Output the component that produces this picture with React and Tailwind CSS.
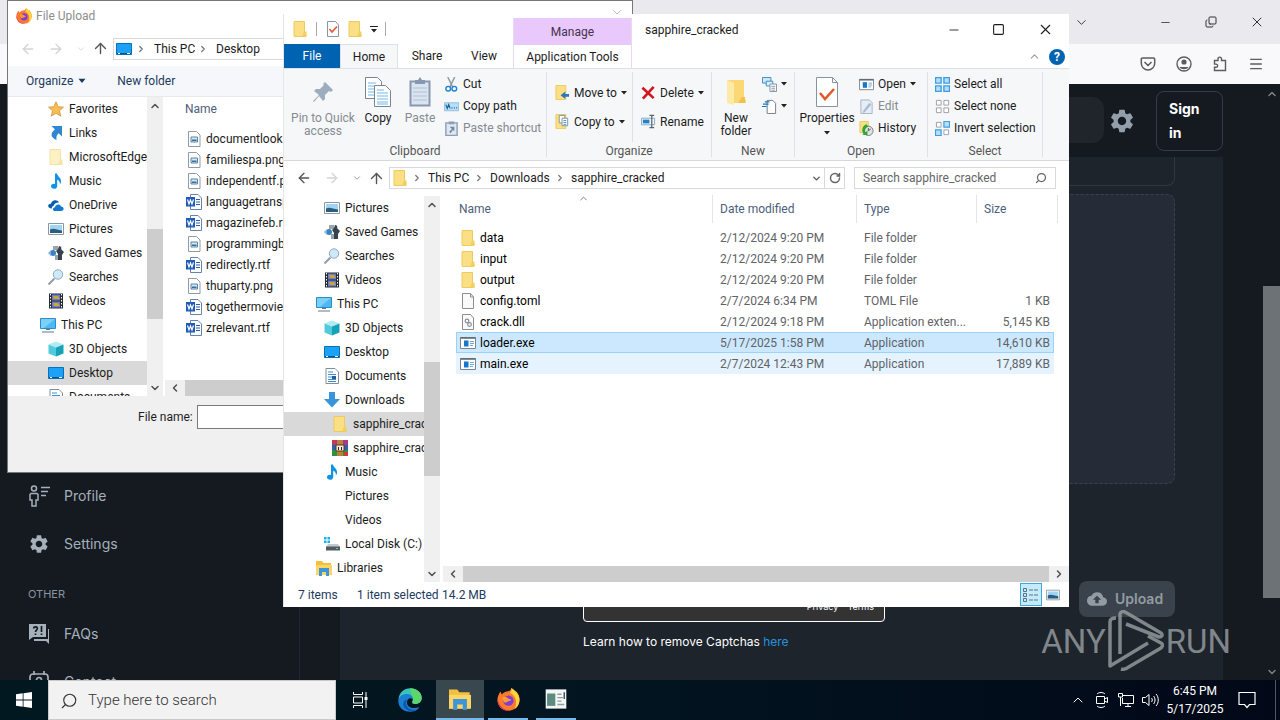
import { ChevronDown, ChevronUp, ChevronLeft, ChevronRight, ArrowLeft, ArrowRight, ArrowUp, Menu, Minus, Square, X, Copy, RotateCw, Search } from 'lucide-react'
import { MdSettings, MdCloudUpload } from 'react-icons/md'

const icons = {
  folder: (
    <>
      <path d="M2 .5h10.500v11.500l1.500 1v2.500H2z" fill="#fbdf84" stroke="#eecb5e" />
      <path d="M12 10.500h2.500v5H10z" fill="#f3cf62" />
    </>
  ),
  palefolder: (
    <>
      <path d="M2 .5h10.500v11.500l1.500 1v2.500H2z" fill="#fdf0c3" stroke="#f3e2a8" />
      <path d="M12 10.500h2.500v5H10z" fill="#f6e4ab" />
    </>
  ),
  star: <path d="m8 .8 2.200 4.900 5.300.5-4 3.500 1.200 5.400L8 12.300l-4.700 2.800 1.200-5.400-4-3.500 5.300-.5z" fill="#f9bd56" stroke="#c98a2c" strokeWidth=".7" />,
  links: <path d="M3.500 1H14v10.500l-3.300-3.200c-2 1.700-2.600 3.700-2.200 6.700C2.500 12.500 2 8 7 4.500z" fill="#2f86d2" />,
  music: <path d="M7 .5h2c.3 3 4.500 4 4 8.500-.1 1.200-.7 2-1.200 2.600.4-2.600-.6-4-2.600-4.800v6.100C9.200 17 2.500 16.500 3 13c.3-2 2.500-2.700 4-2z" fill="#0f93e4" />,
  onedrive: (
    <>
      <path d="M4 11.500C1 11.500 0 10 .2 8.500.5 7 2 6.500 3 6.700 3.500 4 6 2.600 8.500 3.400c1.300.4 2 1.200 2.500 2-3-.2-5.200 1.500-5.500 3.600C4 9.300 3.500 10.500 4 11.500z" fill="#0a5cb0" />
      <path d="M7 14c-2.500 0-2.800-3.500 0-3.700C7.500 7 12 6.500 13 9.500c3.500 0 3.500 4.500 0 4.500z" fill="#1478d0" />
    </>
  ),
  pictures: (
    <>
      <path d="M.5 2.500h15v11H.5z" fill="#fff" stroke="#8a98a5" />
      <path d="M2 4h12v8H2z" fill="#9fd4f4" />
      <path d="M2 8.500c4-2 6 0 12 1V12H2z" fill="#2c5d7d" />
    </>
  ),
  games: (
    <>
      <circle cx="5" cy="8" r="3" fill="#3b82c4" />
      <path d="M0 8 3 5v6z" fill="#7eb1de" />
      <path d="M5 1h5v4H5zM7 10h5v5H7z" fill="#9aa4ac" />
      <path d="M11 1c2 0 3 2 2 3l3 3-2 3v5h-4V9L8 6l2-2z" fill="#36424c" />
    </>
  ),
  searches: (
    <>
      <path d="m6.500 9.500-6 6" stroke="#929da6" strokeWidth="2" />
      <circle cx="10" cy="5.500" r="4.700" fill="#cfe9f9" stroke="#8ba9be" />
    </>
  ),
  videos: (
    <>
      <path d="M1 .5h14v15H1z" fill="#262b38" />
      <path d="M4 1.500h8v6H4zm0 7h8v6H4z" fill="#6f7bd0" />
      <path d="M5 3h5l2 3H6zm0 7h5l2 3H6z" fill="#c0ad2a" />
      <path d="M2.500 1v14m11-14v14" stroke="#fff" strokeDasharray="1.500 1.500" />
    </>
  ),
  pc: (
    <>
      <path d="M.5 1.500h15v10H.5z" fill="#4bb9f3" stroke="#2b8cc9" />
      <path d="M1 2h14L4 11H1z" fill="#7bd0f8" />
      <path d="M2 15h12M6 12.500h4" stroke="#65788a" />
    </>
  ),
  objects: (
    <>
      <path d="m8 .5 7.500 3L8 6.500.5 3.500z" fill="#b1ecf2" />
      <path d="M.5 3.500 8 6.500v9l-7.500-3z" fill="#4fcbdc" />
      <path d="m8 6.500 7.500-3v9l-7.500 3z" fill="#16a3ba" />
    </>
  ),
  desktop: (
    <>
      <path d="M.5 2.500h15v11H.5z" fill="#1ba1f5" stroke="#0571b8" />
      <path d="M1 12.500h14" stroke="#0a4f85" />
      <path d="M2 12.500h2m7 0h3" stroke="#fff" />
    </>
  ),
  documents: (
    <>
      <path d="M2 .5h9l3.500 3.500v11.500H2z" fill="#fff" stroke="#7d8f9e" />
      <path d="M4 4h5M4 6.500h8M4 9h8m-8 2.500h8m-8 2h8" stroke="#3b8fd0" />
      <path d="M8 8h4v3H8z" fill="#285d8d" />
    </>
  ),
  downloads: <path d="M5 0h6v7h5l-8 8.500L0 7h5z" fill="#3a94dc" />,
  rar: (
    <>
      <path d="M0 0h16v5H0z" fill="#a63a86" />
      <path d="M0 5h16v5H0z" fill="#2b62b4" />
      <path d="M0 10h16v6H0z" fill="#2e8f45" />
      <path d="M0 0h4v3H0zm12 12h4v4h-4z" fill="#cf3b33" />
      <path d="M5 0h6v16H5z" fill="#b98133" />
      <path d="M4 5h8v6H4z" fill="#f4ead5" stroke="#63371d" />
      <path d="M6.500 7v3m3-3v3" stroke="#222" />
    </>
  ),
  disk: (
    <>
      <path d="M0 1h2.500v2.500H0zm3.500 0H6v2.500H3.500zM0 4.500h2.500V7H0zm3.500 0H6V7H3.500z" fill="#17b0e8" />
      <path d="M4 8h10l2 3H2z" fill="#c3c9ce" />
      <path d="M2 10.500h14v4H2z" fill="#535b62" />
      <path d="M12 12.500h2" stroke="#56e27e" />
    </>
  ),
  libraries: (
    <>
      <path d="M0 1h6l1.500 2H15v12H0z" fill="#f5bf3e" />
      <path d="M0 5h16v10H0z" fill="#fcd566" />
      <path d="M3 8h10v8h-3v-4H6v4H3z" fill="#3f95d8" />
    </>
  ),
  png: (
    <>
      <path d="M2.500.5h8L14 4v11.500H2.500z" fill="#fff" stroke="#929ba3" />
      <path d="M5 6h6.500v5H5z" fill="#d3e6f4" stroke="#5b83a3" />
      <path d="M6 8.500h4.500V10H6z" fill="#31709c" />
    </>
  ),
  word: (
    <>
      <path d="M4.500.5H12l3.500 3.500v11.500h-11z" fill="#fff" stroke="#6583ad" />
      <path d="M10 5.500h4m-4 2.500h4m-4 2.500h4" stroke="#2b5cab" />
      <path d="M0 3h9v9.500H0z" fill="#1f5bb9" />
      <path d="M1.500 5.500 3 10l1.500-4L6 10l1.500-4.500" fill="none" stroke="#fff" strokeWidth="1.200" />
    </>
  ),
  file: <path d="M2.500.5h8L13.500 4v11.500h-11zM10.500.5V4h3" fill="#fafafa" stroke="#8e8e8e" />,
  dll: (
    <>
      <path d="M2.500.5h8L13.500 4v11.500h-11z" fill="#fafafa" stroke="#8e8e8e" />
      <circle cx="7" cy="7" r="1.800" fill="none" stroke="#858f97" strokeWidth="1.200" />
      <circle cx="9.500" cy="10.500" r="1.800" fill="none" stroke="#858f97" strokeWidth="1.200" />
    </>
  ),
  exe: (
    <>
      <path d="M.5 2.500h15v11H.5z" fill="#fff" stroke="#7a858e" />
      <path d="M.5 3h15" stroke="#5c666e" strokeWidth="1.500" />
      <path d="M4 5.500h4.500v6H4z" fill="#1877c9" />
      <path d="M10 6.500h4m-4 2h4m-4 2h3" stroke="#6ea6d5" />
    </>
  ),
  check: (
    <>
      <path d="M2.500.5h8L13.500 4v11.500h-11z" fill="#fff" stroke="#8797a5" />
      <path d="m4.500 8 2.500 3 5-5.500" fill="none" stroke="#e35a33" strokeWidth="1.700" />
    </>
  ),
  cut: (
    <>
      <path d="m4 0 5.500 11M11.500 0 6 11" stroke="#8b98a3" strokeWidth="1.500" />
      <circle cx="4.500" cy="12.500" r="2.500" fill="none" stroke="#1c83cf" strokeWidth="1.500" />
      <circle cx="11" cy="12.500" r="2.500" fill="none" stroke="#1c83cf" strokeWidth="1.500" />
    </>
  ),
  path: (
    <>
      <path d="M.5 4h15v8.500H.5z" fill="#b9ddf5" stroke="#8cc1e4" />
      <path d="m2 6 1.500 4L5 6l1.500 4M8 9.500h1m1.500 0h1m1.500 0h1" fill="none" stroke="#175b93" strokeWidth="1.200" />
    </>
  ),
  shortcut: (
    <>
      <path d="M2 2h12v13.500H2z" fill="#dfe7f1" stroke="#8e9db3" strokeWidth="1.500" />
      <path d="M5 .5h6v3H5z" fill="#8e9db3" />
      <path d="M6 6h5v5L9.500 9.500 7 13l-1.500-1.500 3-3z" fill="#7187a6" />
    </>
  ),
  move: (
    <>
      <path d="M1 .5h10.500v15H1z" fill="#fbdf84" stroke="#eecb5e" />
      <path d="M15 9.500h-4V7l-5 4 5 4v-2.500h4z" fill="#2b78bd" />
    </>
  ),
  copyto: (
    <>
      <path d="M1 .5h10.500v15H1z" fill="#fbdf84" stroke="#eecb5e" />
      <path d="M4.500 1.500h6v8h-6z" fill="#fff" stroke="#7d90a3" />
      <path d="M7.500 4.500h6v8h-6z" fill="#fff" stroke="#7d90a3" />
      <path d="M9 7h3m-3 2h3m-3 2h3" stroke="#438fcb" />
    </>
  ),
  delete: <path d="m1.500 3 12 11m0-12L2 14.500" stroke="#d2151e" strokeWidth="2.800" />,
  rename: (
    <>
      <path d="M.5 4.500h14v7H.5z" fill="#eef6fc" stroke="#86a7c0" />
      <path d="M2 6h7v4H2z" fill="#2580c7" />
      <path d="M9 1.500h5m-5 13h5m-2.500-13v13" stroke="#59636c" strokeWidth="1.300" />
    </>
  ),
  newitem: (
    <>
      <path d="M.5.500h9v6h-9z" fill="#cfe7f7" stroke="#388bc2" />
      <path d="M4.500 4.500h7v5h-7z" fill="#e2f0f9" stroke="#388bc2" />
      <path d="M8.500 7.500h7v8h-7z" fill="#fff" stroke="#81909c" />
      <path d="M10 10h4m-4 2h4m-4 2h4" stroke="#8b99a5" />
    </>
  ),
  easy: (
    <>
      <path d="M5.500 1.500h6l3 3v11h-9z" fill="#fff" stroke="#6f7c86" />
      <path d="M3 3h5M1 5.500h6M0 8h5" stroke="#1d74b8" strokeWidth="1.300" />
    </>
  ),
  edit: (
    <>
      <path d="M2 1h9l3 3v11.500H2z" fill="#e6edf5" stroke="#a3b1c4" />
      <path d="m13 6-7 8-2 1 1-3 6-8z" fill="#a9bbd3" />
    </>
  ),
  history: (
    <>
      <path d="M1 .5h9v12H1z" fill="#fbdf84" stroke="#eecb5e" />
      <circle cx="10" cy="10.500" r="5" fill="#dfe3e2" stroke="#747f80" />
      <path d="M10 7.500v3l2.500-2" fill="none" stroke="#555" />
      <path d="M8 3.500C3 5 2.500 11 5 14l-2 1h6v-5l-2 2c-1-2-.5-5 3-6z" fill="#33a33a" />
    </>
  ),
  selectall: <path d="M.5.500h6v6h-6zm9 0h6v6h-6zm-9 9h6v6h-6zm9 0h6v6h-6z" fill="#b6def8" stroke="#3c9de0" strokeWidth="1.500" />,
  selectnone: <path d="M1.500 1.500h5v5h-5zm8 0h5v5h-5zm-8 8h5v5h-5zm8 0h5v5h-5z" fill="#fff" stroke="#9a9fa4" />,
  invert: (
    <>
      <path d="M1.500 1.500h5v5h-5zm8 8h5v5h-5z" fill="#fff" stroke="#9a9fa4" />
      <path d="M9.500.500h6v6h-6zm-9 9h6v6h-6z" fill="#b6def8" stroke="#3c9de0" strokeWidth="1.300" />
    </>
  ),
  firefox: (
    <>
      <path d="M8 15.800C3.500 15.800.3 12.500.3 8.500c0-2.500 1-4.300 2.200-6 .2.900.5 1.500 1 2C4.300 3.300 5.500 2.500 7 2.400c2-.2 2.600-.8 3-2.400 1.500 1 2 2.200 2.300 3.400.6-.2.800-.8.800-1.300 2 1.800 2.700 4 2.600 6.500-.2 4.200-3.500 7.200-7.700 7.200z" fill="#ff7a2c" />
      <path d="M10 0c3.500 2 6 5.500 5.600 9-.4 2.500-1.500 4.300-3.200 5.500C14.500 10 13 5 9 3.500 10 2.500 10.200 1 10 0z" fill="#ffd43f" />
      <path d="M.5 7C1 12 4 15.500 9 15.800c-5 .5-9-3.300-8.500-8.800z" fill="#ec2a62" />
      <circle cx="8" cy="8.800" r="3.600" fill="#7a3fd4" />
      <path d="M3.500 6.500c2-.8 3.500-.2 4.500 1l2 .5c-1 1.500-2 1-3 1.800-.8.700-2 .3-2.500-.5z" fill="#ff9a33" />
    </>
  ),
  edge: (
    <>
      <path d="M.3 7.500C.8 3 4 .2 8.200.2c4.500 0 7.600 3 7.600 6.400 0 2.500-2 4-4.200 4-1.800 0-2.500-.8-2-1.600C10.500 7 9 5 6.500 5 3.500 5 1 6.500.3 7.500z" fill="#38c4bb" />
      <path d="M8 .2c4.700 0 7.800 3 7.800 6.400 0 2.500-2 4-4.200 4-1.800 0-2.500-.8-2-1.600.9-1.300.6-2.700-.5-3.500z" fill="#5bd56c" />
      <path d="M.2 8.500C.3 5.500 3 4 5.800 4 8.500 4 10 5.500 9.800 7.500 8 6 6 7.500 6 9.600c0 2.700 2.800 4.700 8.300 3.200-1.300 2-3.600 3-6.300 3-4.500 0-7.800-3-7.800-7.300z" fill="#1b7fd4" />
      <path d="M6 7.500c-2 4 1 8 6.800 6.800C8 17 3.500 14 3.500 10.800 3.500 9 4.500 8 6 7.500z" fill="#1257a5" />
    </>
  ),
  app: (
    <>
      <path d="M.5 1h15v14H.5z" fill="#f4f6f5" />
      <path d="M1.500 4h6v9h-6z" fill="#5b8c7f" />
      <path d="M9 4.500h3M9 7h4m-4 5h5M9 9.500h3" stroke="#8da19b" />
      <path d="M14 3v5" stroke="#38474d" />
    </>
  ),
}

function Icon({ name, className = 'size-4' }) {
  return (
    <svg viewBox="0 0 16 16" className={`shrink-0 ${className}`} aria-hidden="true">
      {icons[name]}
    </svg>
  )
}

function Caret({ className = 'text-[#222]' }) {
  return (
    <svg viewBox="0 0 6 4" className={`h-1 w-1.5 shrink-0 ${className}`} aria-hidden="true">
      <path d="M0 0h6L3 3.500z" fill="currentColor" />
    </svg>
  )
}

const uploadTree = [
  ['star', 'Favorites'],
  ['links', 'Links'],
  ['palefolder', 'MicrosoftEdge'],
  ['music', 'Music'],
  ['onedrive', 'OneDrive'],
  ['pictures', 'Pictures'],
  ['games', 'Saved Games'],
  ['searches', 'Searches'],
  ['videos', 'Videos'],
  ['pc', 'This PC', 0],
  ['objects', '3D Objects'],
  ['desktop', 'Desktop', 1, true],
  ['documents', 'Documents'],
]

const explorerTree = [
  ['pictures', 'Pictures'],
  ['games', 'Saved Games'],
  ['searches', 'Searches'],
  ['videos', 'Videos'],
  ['pc', 'This PC', 0],
  ['objects', '3D Objects'],
  ['desktop', 'Desktop'],
  ['documents', 'Documents'],
  ['downloads', 'Downloads'],
  ['folder', 'sapphire_cracked', 2, true],
  ['rar', 'sapphire_cracked', 2],
  ['music', 'Music'],
  ['', 'Pictures'],
  ['', 'Videos'],
  ['disk', 'Local Disk (C:)'],
  ['libraries', 'Libraries', 0],
]

const uploadFiles = [
  ['png', 'documentlook.png'],
  ['png', 'familiespa.png'],
  ['png', 'independentf.png'],
  ['word', 'languagetransp.rtf'],
  ['word', 'magazinefeb.rtf'],
  ['png', 'programmingb.png'],
  ['word', 'redirectly.rtf'],
  ['png', 'thuparty.png'],
  ['word', 'togethermovie.rtf'],
  ['word', 'zrelevant.rtf'],
]

const files = [
  ['folder', 'data', '2/12/2024 9:20 PM', 'File folder', ''],
  ['folder', 'input', '2/12/2024 9:20 PM', 'File folder', ''],
  ['folder', 'output', '2/12/2024 9:20 PM', 'File folder', ''],
  ['file', 'config.toml', '2/7/2024 6:34 PM', 'TOML File', '1 KB'],
  ['dll', 'crack.dll', '2/12/2024 9:18 PM', 'Application exten...', '5,145 KB'],
  ['exe', 'loader.exe', '5/17/2025 1:58 PM', 'Application', '14,610 KB'],
  ['exe', 'main.exe', '2/7/2024 12:43 PM', 'Application', '17,889 KB'],
]

const indents = ['pl-8', 'pl-10', 'pl-12']

function Tree({ items }) {
  return (
    <ul className="min-w-0 flex-1 overflow-hidden">
      {items.map(([icon, label, level = 1, active], i) => (
        <li key={i}>
          <button className={`flex h-6 w-full items-center gap-[5px] whitespace-nowrap ${indents[level]} ${active ? 'bg-[#d9d9d9]' : ''}`}>
            {icon ? <Icon name={icon} /> : <span className="w-4 shrink-0" />}
            {label}
          </button>
        </li>
      ))}
    </ul>
  )
}

function VScroll({ before, thumb }) {
  return (
    <div className="flex w-4 shrink-0 flex-col items-center bg-[#f0f0f0] text-[#505050]">
      <ChevronUp size={12} strokeWidth={3} className="mt-[3px] mb-[5px] shrink-0" />
      <div className={before} />
      <div className={`w-full bg-[#cdcdcd] ${thumb}`} />
      <ChevronDown size={12} strokeWidth={3} className="mt-auto mb-0.5 shrink-0" />
    </div>
  )
}

function HScroll() {
  return (
    <div className="flex h-4 shrink-0 items-center bg-[#f0f0f0] text-[#505050]">
      <ChevronLeft size={12} strokeWidth={3} className="mx-1 shrink-0" />
      <div className="h-full flex-1 bg-[#cdcdcd]" />
      <ChevronRight size={12} strokeWidth={3} className="mx-1 shrink-0" />
    </div>
  )
}

function FileUpload() {
  return (
    <section className="absolute top-0 left-[7px] flex h-[473px] w-[626px] flex-col border border-[#777] bg-white">
      <header className="flex h-[30px] shrink-0 items-center pl-2 text-[#8d8d8d]">
        <Icon name="firefox" />
        <span className="ml-1 flex-1">File Upload</span>
        <button aria-label="Close dialog" className="mr-2 self-start pt-1.5"><X size={14} strokeWidth={1} /></button>
      </header>
      <div className="flex h-[35px] shrink-0 items-center">
        <button aria-label="Back" className="ml-3 text-[#d4d4d4]"><ArrowLeft size={16} /></button>
        <button aria-label="Forward" className="ml-3 text-[#d4d4d4]"><ArrowRight size={16} /></button>
        <button aria-label="Recent locations" className="ml-3 text-[#d4d4d4]"><ChevronDown size={10} /></button>
        <button aria-label="Up" className="ml-1.5 text-[#555]"><ArrowUp size={17} /></button>
        <nav className="ml-1 flex h-[22px] flex-1 items-center border border-[#d9d9d9] pl-0.5">
          <Icon name="desktop" />
          <ChevronRight size={10} strokeWidth={3} className="mx-1 text-[#777]" />
          <button className="w-12 pl-1 text-left whitespace-nowrap">This PC</button>
          <ChevronRight size={10} strokeWidth={3} className="mr-2 text-[#777]" />
          <button>Desktop</button>
        </nav>
      </div>
      <div className="flex h-[31px] shrink-0 items-center gap-8 border-b border-[#e8ebee] bg-[#f5f7fa] pl-[18px] text-[#223a5e]">
        <button className="flex items-center gap-1.5"><span>Organize</span><Caret className="scale-125" /></button>
        <button>New folder</button>
      </div>
      <div className="flex h-[299px] shrink-0">
        <div className="flex w-[155px] overflow-hidden">
          <Tree items={uploadTree} />
          <VScroll before="h-28" thumb="h-[90px]" />
        </div>
        <div className="ml-0.5 flex flex-1 flex-col">
          <h3 className="flex h-6 items-center pl-5 text-[#4c607a]">Name</h3>
          <ul className="mt-[7px] flex-1 pl-[21px]">
            {uploadFiles.map(([icon, name]) => (
              <li key={name} className="flex h-[21px] items-center gap-1"><Icon name={icon} />{name}</li>
            ))}
          </ul>
          <HScroll />
        </div>
      </div>
      <div className="flex flex-1 items-start bg-[#f0f0f0] pt-[9px] pl-[130px]">
        <label htmlFor="file-name" className="w-[59px] pt-1">File name:</label>
        <input id="file-name" className="h-6 flex-1 border border-[#7a7a7a] bg-white px-1" />
      </div>
    </section>
  )
}

function SmallButton({ icon, label, caret, muted }) {
  return (
    <button className={`flex h-[22px] items-center gap-1 whitespace-nowrap ${muted ? 'text-[#858b91]' : ''}`}>
      <Icon name={icon} className="size-[15px]" />
      {label}
      {caret && <Caret />}
    </button>
  )
}

function BigButton({ label, muted, width, children }) {
  return (
    <button className={`flex flex-col items-center leading-[13px] ${width} ${muted ? 'text-[#858b91]' : ''}`}>
      <span className="mb-1 flex h-8 items-center justify-center">{children}</span>
      {label}
    </button>
  )
}

function Group({ title, width, children }) {
  return (
    <section className={`my-[3px] flex shrink-0 flex-col border-r border-[#dfe2e5] ${width}`}>
      <div className="flex flex-1 items-start">{children}</div>
      <h3 className="text-center leading-3 text-[#555]">{title}</h3>
    </section>
  )
}

function Ribbon() {
  return (
    <div className="flex h-[92px] shrink-0 overflow-hidden border-b border-[#d5d8dc] bg-[#f5f7f9]">
      <Group title="Clipboard" width="w-[263px]">
        <BigButton width="ml-1.5 w-[66px] pt-1" muted label="Pin to Quick access">
          <svg viewBox="0 0 24 24" className="size-6">
            <path d="m14 2 8 8-2 2-2-1-4 4v4l-2 2-4-5-5 6-1-1 6-6-5-4 2-2h4l4-4-1-1z" fill="#9dadbf" />
          </svg>
        </BigButton>
        <BigButton width="w-11 pt-1" label="Copy">
          <svg viewBox="0 0 26 30" className="h-[30px] w-[26px]" fill="#fff" stroke="#788592">
            <path d="M.5.500h12l4 4v17H.5z" />
            <path d="M9.500 8.500h11l5 5v16h-16z" />
            <path d="M3 6h8M3 9h6M3 12h6M3 15h6M3 18h6m3-5h7m-7 3h11m-11 3h11m-11 3h11m-11 3h11m-11 2h11" stroke="#75b6e8" />
          </svg>
        </BigButton>
        <BigButton width="w-10 pt-1" muted label="Paste">
          <svg viewBox="0 0 22 30" className="h-[30px] w-[22px]">
            <path d="M1.500 4.500h19v24h-19z" fill="#dae3f0" stroke="#8898b2" strokeWidth="2" />
            <path d="M6 3h3l2-3 2 3h3v4H6z" fill="#8898b2" />
            <path d="M4 11h14M4 15h14M4 19h14M4 23h14" stroke="#b1c0d5" />
          </svg>
        </BigButton>
        <div className="ml-1 pt-px">
          <SmallButton icon="cut" label="Cut" />
          <SmallButton icon="path" label="Copy path" />
          <SmallButton icon="shortcut" label="Paste shortcut" muted />
        </div>
      </Group>
      <Group title="Organize" width="w-[165px]">
        <div className="mr-2 flex h-[70px] w-[86px] flex-col justify-center gap-[7px] border-r border-[#dfe2e5] pl-2">
          <SmallButton icon="move" label="Move to" caret />
          <SmallButton icon="copyto" label="Copy to" caret />
        </div>
        <div className="flex h-[70px] flex-col justify-center gap-[7px]">
          <SmallButton icon="delete" label="Delete" caret />
          <SmallButton icon="rename" label="Rename" />
        </div>
      </Group>
      <Group title="New" width="w-[83px]">
        <BigButton width="w-12 pt-1" label="New folder">
          <svg viewBox="0 0 20 28" className="h-7 w-5">
            <path d="M1 2h17v18l2 2v3H1z" fill="#fbd874" />
            <path d="m1 2 7 3v22l-7-2z" fill="#fde9a8" />
            <path d="M16 19h3v6h-7z" fill="#f0c14d" />
          </svg>
        </BigButton>
        <div className="ml-0.5 pt-px">
          <SmallButton icon="newitem" caret />
          <SmallButton icon="easy" caret />
        </div>
      </Group>
      <Group title="Open" width="w-[133px]">
        <BigButton
          width="w-16 pt-1"
          label={
            <span className="flex flex-col items-center gap-1.5">
              Properties
              <Caret />
            </span>
          }
        >
          <svg viewBox="0 0 22 30" className="h-[30px] w-[22px]">
            <path d="M.5.500h16l5 5v24H.5zM16.500.5v5h5" fill="#fff" stroke="#87939d" />
            <path d="m4 16 5 6 9-10" fill="none" stroke="#e5562b" strokeWidth="2.500" />
          </svg>
        </BigButton>
        <div className="pt-px">
          <SmallButton icon="exe" label="Open" caret />
          <SmallButton icon="edit" label="Edit" muted />
          <SmallButton icon="history" label="History" />
        </div>
      </Group>
      <Group title="Select" width="w-[115px]">
        <div className="pt-px pl-[7px]">
          <SmallButton icon="selectall" label="Select all" />
          <SmallButton icon="selectnone" label="Select none" />
          <SmallButton icon="invert" label="Invert selection" />
        </div>
      </Group>
    </div>
  )
}

const cellStyles = {
  'loader.exe': 'border-y border-[#99d1ff] bg-[#cce8ff]',
  'main.exe': 'bg-[#e5f3ff]',
}

function FileTable() {
  return (
    <table className="w-full table-fixed border-separate border-spacing-0 text-left text-[#5f6368]">
      <colgroup>
        <col />
        <col className="w-36" />
        <col className="w-[120px]" />
        <col className="w-[77px]" />
        <col className="w-1" />
      </colgroup>
      <thead className="text-[#4c607a]">
        <tr className="h-7">
          <th className="border-r border-[#e5e5e5] pl-[3px] font-normal">Name</th>
          <th className="border-r border-[#e5e5e5] pl-[7px] font-normal">Date modified</th>
          <th className="border-r border-[#e5e5e5] pl-[7px] font-normal">Type</th>
          <th className="pl-[7px] font-normal">Size</th>
          <th className="border-r border-[#e5e5e5]" aria-hidden="true" />
        </tr>
      </thead>
      <tbody>
        <tr className="h-1" aria-hidden="true"><td /></tr>
        {files.map(([icon, name, date, type, size]) => {
          const cell = cellStyles[name] ?? ''
          const selected = name === 'loader.exe'
          return (
            <tr key={name} className="h-[21px]">
              <td className={`p-0 text-black ${cell} ${selected ? 'border-l pl-[3px]' : 'pl-1'}`}>
                <span className="flex items-center gap-1"><Icon name={icon} />{name}</span>
              </td>
              <td className={`p-0 pl-[7px] ${cell}`}>{date}</td>
              <td className={`truncate p-0 pl-[7px] ${cell}`}>{type}</td>
              <td className={`p-0 text-right ${cell} ${selected ? 'border-r pr-[3px]' : 'pr-1'}`}>{size}</td>
            </tr>
          )
        })}
      </tbody>
    </table>
  )
}

function Explorer() {
  return (
    <section className="absolute top-3.5 right-[211px] bottom-[113px] left-[283px] flex flex-col overflow-hidden border-l border-[#e3e6ea] bg-white">
      <div className="flex h-[55px] shrink-0 border-b border-[#dfe2e5]">
        <div className="flex w-[229px] flex-col">
          <div className="flex h-[31px] items-center pl-2">
            <Icon name="folder" />
            <span className="mx-2 h-3.5 w-px bg-[#aaa]" />
            <Icon name="check" />
            <Icon name="folder" className="ml-1.5 size-4" />
            <button aria-label="Customize toolbar" className="mx-[7px] flex flex-col items-center gap-0.5">
              <span className="h-px w-2 bg-[#222]" />
              <Caret />
            </button>
            <span className="h-3.5 w-px bg-[#aaa]" />
          </div>
          <div className="flex h-6">
            <button className="w-14 bg-[#0063b1] text-white">File</button>
            <button className="h-6 w-[58px] border-x border-t border-[#dfe2e5] bg-[#f5f7f9]">Home</button>
            <button className="w-[58px]">Share</button>
            <button className="w-14">View</button>
          </div>
        </div>
        <div className="mt-1 flex w-[119px] flex-col border-x border-[#ead8f2]">
          <div className="flex h-[27px] items-center justify-center bg-[#e9c9fb] text-[#443350]">Manage</div>
          <button className="flex-1">Application Tools</button>
        </div>
        <div className="flex flex-1 flex-col">
          <div className="flex h-[31px] items-center pl-[13px]">
            <h1 className="flex-1">sapphire_cracked</h1>
            <button aria-label="Minimize" className="flex w-[45px] justify-center"><Minus size={14} strokeWidth={1.5} /></button>
            <button aria-label="Maximize" className="flex w-[45px] justify-center"><Square size={13} strokeWidth={2} /></button>
            <button aria-label="Close" className="flex w-12 justify-center"><X size={17} strokeWidth={1.5} /></button>
          </div>
          <div className="flex flex-1 items-center justify-end gap-2 pr-1 text-[#999]">
            <button aria-label="Collapse ribbon"><ChevronUp size={13} /></button>
            <button aria-label="Help" className="size-4 rounded-full bg-[#0063b1] font-bold leading-4 text-white">?</button>
          </div>
        </div>
      </div>
      <Ribbon />
      <div className="flex h-[34px] shrink-0 items-center pr-[13px]">
        <button aria-label="Back" className="ml-3 text-[#555]"><ArrowLeft size={16} /></button>
        <button aria-label="Forward" className="ml-3 text-[#d4d4d4]"><ArrowRight size={16} /></button>
        <button aria-label="Recent locations" className="ml-3 text-[#888]"><ChevronDown size={10} /></button>
        <button aria-label="Up" className="ml-1.5 text-[#555]"><ArrowUp size={17} /></button>
        <nav className="ml-1 flex h-[22px] flex-1 items-center border border-[#d9d9d9] pl-0.5">
          <Icon name="folder" />
          <ChevronRight size={10} strokeWidth={3} className="mx-1 text-[#777]" />
          <button className="w-11 pl-0.5 text-left whitespace-nowrap">This PC</button>
          <ChevronRight size={10} strokeWidth={3} className="mx-1 text-[#777]" />
          <button className="w-[63px] pl-0.5 text-left">Downloads</button>
          <ChevronRight size={10} strokeWidth={3} className="mx-1 text-[#777]" />
          <button className="flex-1 pl-0.5 text-left">sapphire_cracked</button>
          <button aria-label="Previous locations" className="px-0.5 text-[#555]"><ChevronDown size={11} strokeWidth={3} /></button>
          <button aria-label="Refresh" className="flex h-full w-5 items-center justify-center border-l border-[#d9d9d9] text-[#666]"><RotateCw size={12} strokeWidth={3} /></button>
        </nav>
        <label className="ml-[9px] flex h-[22px] w-[202px] items-center border border-[#d9d9d9] px-2">
          <input type="search" aria-label="Search sapphire_cracked" placeholder="Search sapphire_cracked" className="min-w-0 flex-1 outline-none placeholder:text-[#666]" />
          <Search size={12} strokeWidth={2.5} className="-scale-x-100 text-[#666]" />
        </label>
      </div>
      <div className="flex min-h-0 flex-1">
        <div className="flex w-[156px] shrink-0 pt-px">
          <Tree items={explorerTree} />
          <VScroll before="h-[146px]" thumb="h-[114px]" />
        </div>
        <div className="relative flex min-w-0 flex-1 flex-col">
          <ChevronUp size={11} className="absolute -top-0.5 left-[138px] text-[#777]" />
          <div className="flex-1 pr-[11px] pl-4"><FileTable /></div>
          <div className="pl-[3px]"><HScroll /></div>
        </div>
      </div>
      <footer className="flex h-[25px] shrink-0 items-center pl-3.5 text-[#223a5e]">
        <span className="w-[59px]">7 items</span>
        <span className="w-[85px]">1 item selected</span>
        <span className="flex-1">14.2 MB</span>
        <button aria-label="Details view" className="flex h-[23px] w-[22px] items-center justify-center border border-[#3fa7dd] bg-[#c4ebfa]">
          <svg viewBox="0 0 16 14" className="h-3.5 w-4" fill="none" stroke="#5a7282">
            <path d="M.5.500h3v3h-3zm0 5h3v3h-3zm0 5h3v3h-3zM6 2h4m1 0h4M6 7h4m1 0h4m-9 5h4m1 0h4" />
          </svg>
        </button>
        <button aria-label="Thumbnail view" className="mr-[9px] ml-1"><Icon name="pictures" className="size-3.5" /></button>
      </footer>
    </section>
  )
}

function Browser() {
  return (
    <div className="flex min-h-0 flex-1 flex-col bg-[#151a21] font-[Inter,sans-serif]">
      <div className="flex h-11 shrink-0 items-center justify-end bg-[#eaeaee] text-[#333]">
        <button aria-label="List all tabs" className="mr-[70px]"><ChevronDown size={15} strokeWidth={1.5} /></button>
        <button aria-label="Minimize browser" className="mr-[33px]"><Minus size={13} strokeWidth={1.5} /></button>
        <button aria-label="Restore browser" className="mr-8"><Copy size={12} strokeWidth={2} className="-scale-x-100 rotate-180" /></button>
        <button aria-label="Close browser" className="mr-[15px]"><X size={16} strokeWidth={1.5} /></button>
      </div>
      <div className="flex h-10 shrink-0 items-center justify-end gap-5 bg-[#f9f9fb] pr-4 text-[#5b5b66]">
        <button aria-label="Save to Pocket">
          <svg viewBox="0 0 16 16" className="size-4" fill="none" stroke="currentColor" strokeWidth="1.500">
            <path d="M2.500 2h11c.8 0 1.200.5 1.200 1.200v4a6.700 6.700 0 0 1-13.400 0v-4C1.300 2.500 1.700 2 2.500 2zM4.500 6 8 9.500 11.500 6" />
          </svg>
        </button>
        <button aria-label="Account">
          <svg viewBox="0 0 16 16" className="size-4">
            <circle cx="8" cy="8" r="7" fill="none" stroke="currentColor" strokeWidth="1.400" />
            <circle cx="8" cy="6" r="2.600" fill="currentColor" />
            <path d="M3.500 11h9c-1.500 3-7.500 3-9 0z" fill="currentColor" />
          </svg>
        </button>
        <button aria-label="Extensions">
          <svg viewBox="0 0 16 16" className="size-4" fill="none" stroke="currentColor" strokeWidth="1.400">
            <path d="M2.500 4.500H6V3c0-2.500 3.500-2.500 3.500 0v1.500h4v10h-11v-3.200H4c2.200 0 2.200-3.200 0-3.200H2.500z" />
          </svg>
        </button>
        <button aria-label="Menu"><Menu size={16} /></button>
      </div>
      <div className="flex min-h-0 flex-1 overflow-hidden">
        <aside className="flex w-[300px] shrink-0 flex-col overflow-hidden border-r border-[#20262f] pt-[388px] text-sm text-[#a5b0bb]">
          <a href="#profile" className="flex h-12 shrink-0 items-center gap-3.5 pl-7">
            <svg viewBox="0 0 22 24" className="h-6 w-[22px]" fill="none" stroke="currentColor" strokeWidth="1.500">
              <circle cx="6" cy="4.500" r="2.500" />
              <path d="M3 9.500h6l1 1v5.500H8v6H4v-6H2v-5.500zM13 3.500h9m-9 4h7m-7 4h5" />
            </svg>
            Profile
          </a>
          <a href="#settings" className="flex h-12 shrink-0 items-center gap-3.5 pl-7"><MdSettings size={22} />Settings</a>
          <h2 className="mt-2.5 shrink-0 pl-7 text-[11px] leading-8 text-[#8894a0]">OTHER</h2>
          <a href="#faqs" className="flex h-12 shrink-0 items-center gap-3.5 pl-7">
            <svg viewBox="0 0 22 22" className="size-[22px]">
              <path d="M1 1h17v13H5l-4 3z" fill="currentColor" />
              <path d="M20 6v10H6v2h12l3 3V6z" fill="currentColor" />
              <path d="M5.500 5.500c.5-2.500 4-2 3.800.2-.2 1.500-1.800 1.500-1.800 3.300m0 1.500V12M13.500 3v6m0 1.500V12" fill="none" stroke="#151a21" strokeWidth="1.700" />
            </svg>
            FAQs
          </a>
          <a href="#contact" className="flex h-12 shrink-0 items-center gap-3.5 pl-7">
            <svg viewBox="0 0 22 22" className="size-[22px]" fill="none" stroke="currentColor" strokeWidth="1.700">
              <rect x="2" y="3" width="18" height="17" rx="3" />
              <path d="M6 0v4m10-4v4M6 17c1-4 9-4 10 0" />
              <circle cx="11" cy="9" r="2.500" />
            </svg>
            Contact
          </a>
        </aside>
        <main className="flex min-w-0 flex-1 flex-col pr-10 pl-10">
          <div className="flex h-[73px] shrink-0 items-start gap-5 pt-[7px]">
            <div className="mt-1.5 h-[46px] flex-1 rounded-xl bg-[#20252c]" />
            <button aria-label="Preferences" className="mt-4 -ml-4 text-[#929ea9]"><MdSettings size={28} /></button>
            <button className="h-[60px] w-[67px] rounded-lg border border-[#343c45] px-3 text-left text-sm leading-6 font-bold text-white">Sign in</button>
          </div>
          <div className="flex-1 bg-[#1d242b] px-12">
            <div className="h-[29px] rounded-b-lg border border-t-0 border-[#2f3842]" />
            <div className="mt-2 h-[290px] rounded-lg border border-dashed border-[#39434f] bg-[#252c37]" />
            <div className="mt-[62px] flex items-end justify-end gap-[194px]">
              <div className="-mb-[5px] flex h-[76px] w-[302px] items-end justify-end rounded border border-white bg-[#333] px-2.5 pb-2 text-[9px] leading-3 text-white">Privacy - Terms</div>
              <button className="flex h-9 w-24 items-center gap-2 rounded-lg bg-[#3a424b] pl-2 text-sm font-semibold text-[#929ba3]"><MdCloudUpload size={20} />Upload</button>
            </div>
            <p className="mt-[15px] pl-[195px] text-xs leading-5 text-white">Learn how to remove Captchas <a href="#captcha" className="text-[#2493df]">here</a></p>
          </div>
        </main>
        <div className="flex w-[17px] shrink-0 flex-col items-center text-[#7b8187]">
          <ChevronUp size={12} strokeWidth={3} className="mt-1" />
          <div className="h-[186px]" />
          <div className="h-[312px] w-full bg-[#6d7276]" />
          <ChevronDown size={12} strokeWidth={3} className="mt-auto mb-0.5" />
        </div>
      </div>
    </div>
  )
}

function Taskbar() {
  return (
    <footer className="flex h-10 shrink-0 items-stretch bg-linear-to-r from-[#021820] via-[#021420] to-[#020818] text-white">
      <button aria-label="Start" className="flex w-12 items-center justify-center">
        <svg viewBox="0 0 16 16" className="size-4"><path d="M0 2.200 6.700 1.300v6.300H0zm7.500-1L16 0v7.600H7.500zM0 8.400h6.700v6.300L0 13.800zm7.500 0H16V16l-8.500-1.200z" fill="#fff" /></svg>
      </button>
      <label className="flex w-72 items-center gap-2.5 border border-[#c9c9c9] bg-[#f2f2f2] pt-px pl-[11px] text-[#333]">
        <Search size={18} strokeWidth={1.5} className="-scale-x-100" />
        <input type="search" aria-label="Type here to search" placeholder="Type here to search" className="min-w-0 flex-1 text-[15px] font-light outline-none placeholder:text-[#333]" />
      </label>
      <button aria-label="Task view" className="flex w-12 items-center justify-center">
        <svg viewBox="0 0 16 16" className="size-4" fill="none" stroke="#fff"><path d="M1.500 0v2.500h9V0M1.500 16v-2.500h9V16M1.500 5h9v6h-9zM14 0v16" /><path d="M12.500 5h3v3h-3z" fill="#fff" stroke="none" /></svg>
      </button>
      <button aria-label="Edge" className="flex w-[52px] items-center justify-center"><Icon name="edge" className="size-6" /></button>
      <button aria-label="File Explorer" className="flex w-12 items-center justify-center border-b-2 border-[#76b9ed] bg-[#39484f]"><Icon name="libraries" className="size-[22px]" /></button>
      <button aria-label="Firefox" className="mx-1 flex w-10 items-center justify-center border-b-2 border-[#76b9ed]"><Icon name="firefox" className="size-[23px]" /></button>
      <button aria-label="Application" className="mx-1 flex w-10 items-center justify-center border-b-2 border-[#76b9ed]"><Icon name="app" className="size-[22px]" /></button>
      <div className="ml-auto flex items-center">
        <button aria-label="Show hidden icons" className="mr-2"><ChevronUp size={16} strokeWidth={1.5} /></button>
        <svg viewBox="0 0 16 16" className="mr-2 size-4" fill="none" stroke="#fff"><path d="M2.500 4.500h8v7h-8zM10.500 7l3-1.500v5l-3-1.500M3 2c2-2 6-2 8 0M3 14c2 2 6 2 8 0" /></svg>
        <svg viewBox="0 0 16 16" className="mr-2 size-4" fill="none" stroke="#fff"><path d="M5 3.500h10.500v8H4.500V6M.5 1.500h4V5h-4zM2.500 5v9M7 14.500h6m-3-3v3" /></svg>
        <svg viewBox="0 0 18 16" className="mr-1 h-4 w-[18px]" fill="none" stroke="#fff"><path d="M.5 5.500h3l3.500-3v11l-3.500-3h-3zM9.500 6c1 1 1 3 0 4m2-6c2 2 2 6 0 8m2.500-10c3 3 3 9 0 12" /></svg>
        <div className="w-[62px] text-center leading-[18px]">
          <p>6:45 PM</p>
          <p>5/17/2025</p>
        </div>
        <button aria-label="Notifications" className="ml-3 flex w-[18px]">
          <svg viewBox="0 0 18 18" className="size-[18px]" fill="none" stroke="#fff" strokeWidth="1.200"><path d="M1 1.500h16v12h-5.500L9 16.500l-2.500-3H1z" /></svg>
        </button>
        <div className="mr-1 ml-[19px] h-10 w-px bg-[#4b5968]" />
      </div>
    </footer>
  )
}

function Watermark() {
  return (
    <div className="pointer-events-none absolute right-[49px] bottom-[47px] flex h-16 items-center text-[#9b9fa3] opacity-80">
      <span className="text-[33px] leading-none">ANY</span>
      <svg viewBox="0 0 56 62" className="mx-0.5 h-[62px] w-14" fill="none" stroke="currentColor" strokeWidth="3.500" strokeLinejoin="round">
        <path d="M8 8c-4 0-6 1-6 4v44l38-23" />
        <path d="M12 44V4c0-2 3-3 5-2l36 21c2 2 1 4-2 4L18 14" />
        <path d="M13 59c3 1 4 0 6-1l34-20c2-2 2-4 0-5l-13-7" />
      </svg>
      <span className="text-[33px] leading-none">RUN</span>
    </div>
  )
}

export default function App() {
  return (
    <div className="relative flex h-screen flex-col overflow-hidden font-[Roboto,'Noto_Sans',sans-serif] text-xs text-[#1c1c1c]">
      <Browser />
      <FileUpload />
      <Explorer />
      <Watermark />
      <Taskbar />
    </div>
  )
}
